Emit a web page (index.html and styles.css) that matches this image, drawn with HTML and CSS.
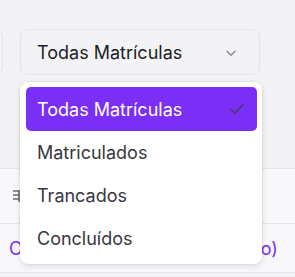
FILE: index.html
```html
<!DOCTYPE html>
<html lang="pt-BR">
<head>
  <meta charset="UTF-8" />
  <meta name="viewport" content="width=device-width, initial-scale=1.0"/>
  <title>Matrículas</title>
  <link rel="stylesheet" href="styles.css">
</head>
<body>
  <div class="filtros">
    <div class="campo campo-busca"></div>
    <div class="campo select-status">
      <span>Todas Matrículas</span>
      <svg class="chevron" width="14" height="14" viewBox="0 0 24 24" fill="none" stroke="#8a8a92" stroke-width="2.4" stroke-linecap="round" stroke-linejoin="round"><path d="M5 9l7 7 7-7"/></svg>
    </div>
  </div>

  <table class="tabela">
    <tr class="linha-topo">
      <td>
        <svg class="icone-ordem" width="16" height="16" viewBox="0 0 16 16" fill="none" stroke="#6b6b73" stroke-width="1.6">
          <path d="M2 3h12M2 7h12M2 11h12M8 3v11"/>
        </svg>
      </td>
    </tr>
    <tr class="linha-curso">
      <td><span class="link-curso">Ciências Econômicas (Noturno)</span></td>
    </tr>
  </table>

  <!-- Menu aberto do select -->
  <ul class="menu-status">
    <li class="ativo">Todas Matrículas
      <svg width="18" height="18" viewBox="0 0 24 24" fill="none" stroke="#4a3a6e" stroke-width="2" stroke-linecap="round" stroke-linejoin="round"><path d="M4 12.5l5 5L20 6.5"/></svg>
    </li>
    <li>Matriculados</li>
    <li>Trancados</li>
    <li>Concluídos</li>
  </ul>
</body>
</html>
```

FILE: styles.css
```css
body {
  font-family: Inter, "Noto Sans", sans-serif;
  margin: 0;
  padding: 0;
  background-color: #f3f3f6;
  overflow: hidden;
}

.filtros {
  display: flex;
  gap: 17px;
  padding-top: 29px;
}

.campo {
  height: 46px;
  border: 1px solid #e4e4e9;
  border-radius: 8px;
  background-color: #f3f3f6;
  box-sizing: border-box;
}

.campo-busca {
  width: 120px;
  margin-left: -117px;
}

.select-status {
  width: 240px;
  display: flex;
  align-items: center;
  justify-content: space-between;
  padding: 0 21px 0 16px;
  font-size: 18px;
  color: #1e1e24;
}

.chevron {
  margin-top: 1px;
}

.tabela {
  width: 100%;
  margin-top: 93px;
  border-collapse: collapse;
  background-color: #f8f8fa;
}

.tabela td {
  border-top: 1px solid #e6e6eb;
  border-bottom: 1px solid #e6e6eb;
  padding: 0 0 0 9px;
}

.linha-topo td {
  height: 54px;
  padding-left: 11px;
}

.linha-curso td {
  height: 48px;
  white-space: nowrap;
}

.icone-ordem {
  display: block;
}

.link-curso {
  color: #7b2ef6;
  font-size: 18px;
}

.menu-status {
  position: absolute;
  top: 82px;
  left: 20px;
  width: 242px;
  margin: 0;
  padding: 5px 5px 4px 6px;
  box-sizing: border-box;
  list-style: none;
  background-color: white;
  border-radius: 8px;
  box-shadow: 0 2px 6px rgba(0, 0, 0, 0.12), 0 0 0 1px rgba(0, 0, 0, 0.03);
}

.menu-status li {
  height: 43px;
  display: flex;
  align-items: center;
  justify-content: space-between;
  padding: 0 11px;
  font-size: 18px;
  color: #38383e;
  border-radius: 5px;
}

.menu-status li.ativo {
  height: 44px;
  background-color: #7b2ef6;
  color: white;
}
```
